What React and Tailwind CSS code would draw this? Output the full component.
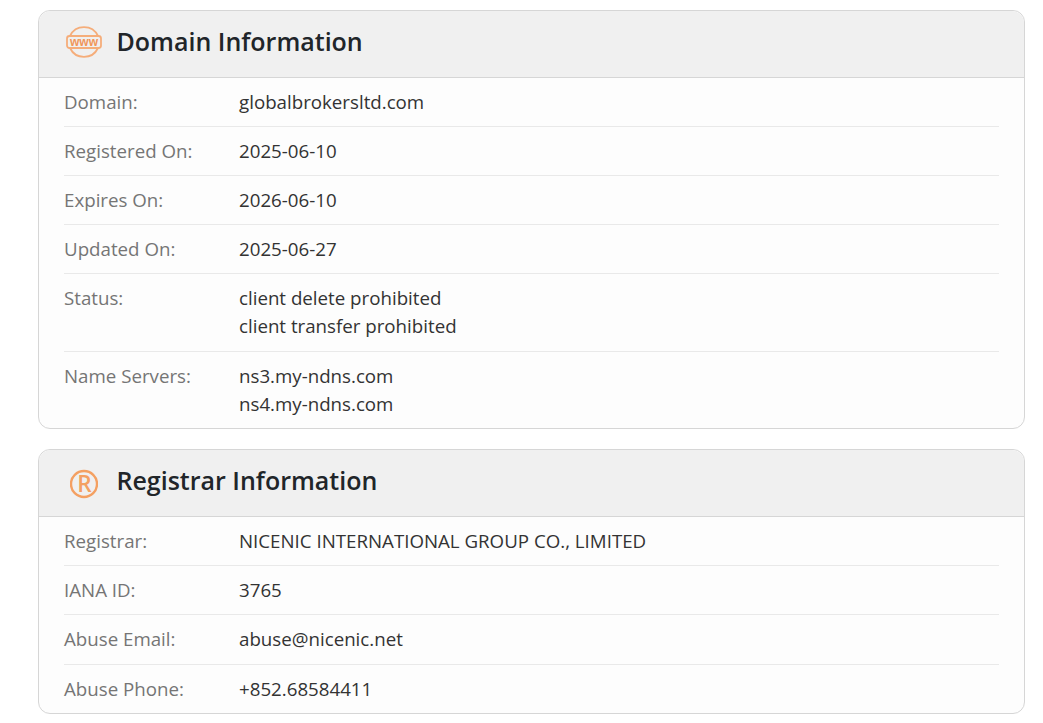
const domainRows = [
  { label: "Domain:", values: ["globalbrokersltd.com"] },
  { label: "Registered On:", values: ["2025-06-10"] },
  { label: "Expires On:", values: ["2026-06-10"] },
  { label: "Updated On:", values: ["2025-06-27"] },
  { label: "Status:", values: ["client delete prohibited", "client transfer prohibited"] },
  { label: "Name Servers:", values: ["ns3.my-ndns.com", "ns4.my-ndns.com"] },
];

const registrarRows = [
  { label: "Registrar:", values: ["NICENIC INTERNATIONAL GROUP CO., LIMITED"] },
  { label: "IANA ID:", values: ["3765"] },
  { label: "Abuse Email:", values: ["abuse@nicenic.net"] },
  { label: "Abuse Phone:", values: ["+852.68584411"] },
];

function WwwIcon() {
  return (
    <svg width="36" height="32" viewBox="0 0 36 32" fill="none" stroke="#f5ad7a" strokeWidth="1.8">
      <path d="M4 10a15.5 15.5 0 0 1 28 0" />
      <path d="M4 22a15.5 15.5 0 0 0 28 0" />
      <rect x="1" y="10" width="34" height="12" rx="2.5" />
      <text x="18" y="19.6" textAnchor="middle" fontFamily="'Liberation Sans', sans-serif" fontSize="12" fontWeight="700" fill="#f0965a" stroke="none">
        www
      </text>
    </svg>
  );
}

function RegisteredIcon() {
  return (
    <svg width="28" height="30" viewBox="0 0 28 30" fill="none" className="mt-[6px]">
      <circle cx="14" cy="15" r="13" stroke="#f4a062" strokeWidth="2.4" />
      <text x="14.4" y="23" textAnchor="middle" fontFamily="'Open Sans', sans-serif" fontSize="22.5" fontWeight="600" fill="#f4a062">
        R
      </text>
    </svg>
  );
}

function InfoCard({ icon, title, rows }) {
  return (
    <section className="rounded-xl border border-[#d6d6d6] bg-[#fdfdfd]">
      <header className="flex items-center h-[67.1px] pb-[4.6px] rounded-t-xl bg-[#f0f0f0] border-b border-[#d6d6d6]">
        <div className="w-9 ml-[27px] mr-[14.5px] flex justify-center">{icon}</div>
        <h2 className="text-[25px] font-semibold text-[#212529]">{title}</h2>
      </header>
      <div className="px-[25px]">
        {rows.map((row) => (
          <div key={row.label} className="flex py-2.5 border-b border-[#e9e9e9] last:border-b-0 leading-[1.5]">
            <div className="w-[175px] shrink-0 text-[#757575]">{row.label}</div>
            <div className="text-[#333]">
              {row.values.map((v) => (
                <div key={v}>{v}</div>
              ))}
            </div>
          </div>
        ))}
      </div>
    </section>
  );
}

export default function App() {
  return (
    <div className="min-h-screen bg-white pt-2.5 pl-[38px] pr-[18px] flex flex-col gap-[20.52px] font-['Open_Sans',sans-serif] text-[18.72px]">
      <InfoCard icon={<WwwIcon />} title="Domain Information" rows={domainRows} />
      <InfoCard icon={<RegisteredIcon />} title="Registrar Information" rows={registrarRows} />
    </div>
  );
}
